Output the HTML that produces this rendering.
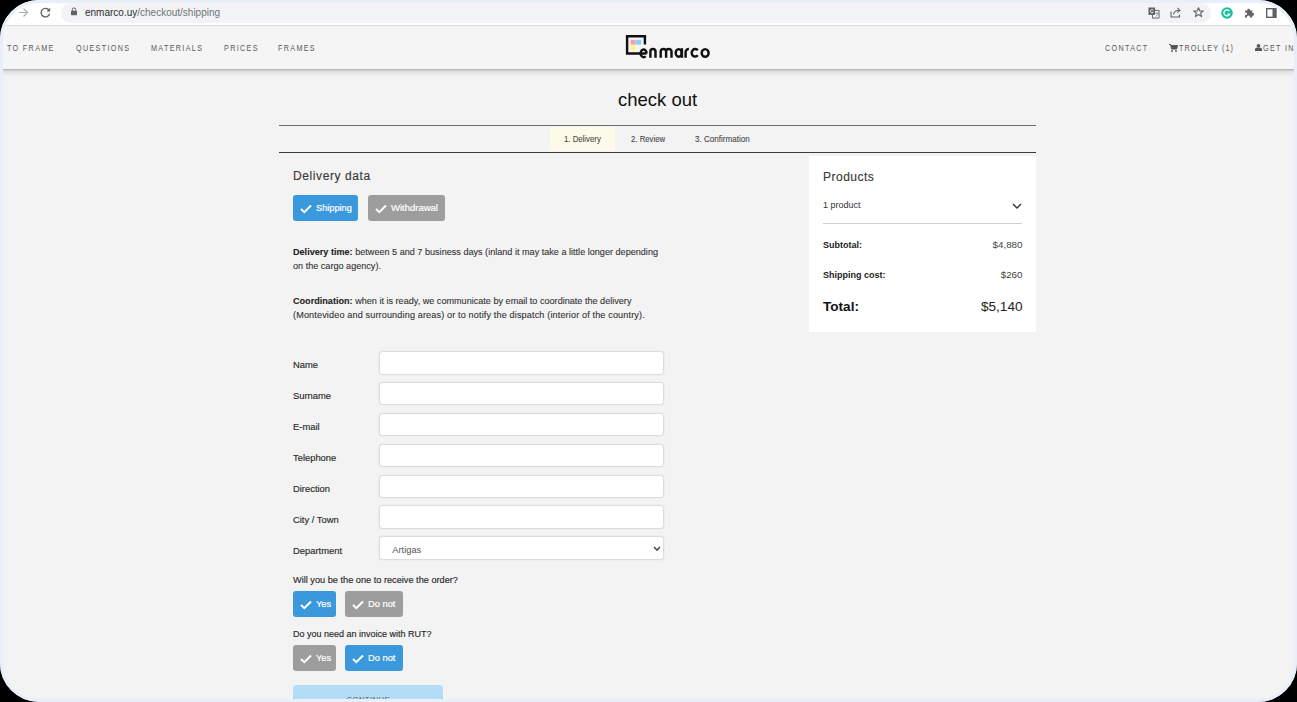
<!DOCTYPE html>
<html><head><meta charset="utf-8">
<style>
*{margin:0;padding:0;box-sizing:border-box}
html,body{width:1297px;height:702px;overflow:hidden;background:#f3f3f3;font-family:"Liberation Sans",sans-serif;position:relative}
.ab{position:absolute;white-space:nowrap;line-height:1}
#tb{position:absolute;left:0;top:0;width:1297px;height:26px;background:#fff;border-bottom:1px solid #e3e3e3}
#url{position:absolute;left:61px;top:3px;width:1150px;height:20px;border-radius:10px;background:#f1f3f4}
#nav{position:absolute;left:0;top:26px;width:1297px;height:43px;background:#f5f5f5;box-shadow:0 1px 2px rgba(0,0,0,.22),0 3px 6px rgba(0,0,0,.13)}
.nv{font-size:8.4px;letter-spacing:1.55px;color:#595959;top:18px;transform:scaleX(.86);transform-origin:0 0}
#frame{position:absolute;left:0;top:0;width:1297px;height:702px;border-radius:39px;border:3px solid #e8eff9;box-shadow:0 0 0 60px #000;pointer-events:none}
.cond{transform-origin:0 0}
.btn{position:absolute;border-radius:3px;color:#fff;font-size:9.3px;-webkit-text-stroke:.2px #fff}
.blue{background:#3a98dc}
.gray{background:#9d9d9d}
.btn svg{position:absolute}
.btn span{position:absolute;line-height:1}
.lbl{font-size:9.4px;color:#2a2a2a;-webkit-text-stroke:.15px #2a2a2a}
.inp{position:absolute;left:379.3px;width:284.5px;height:23.4px;background:#fff;border:1px solid #dcdcdc;border-radius:3.5px;box-shadow:0 0 0 .6px #e9e9e9}
.p9{font-size:9.1px;color:#363636;-webkit-text-stroke:.12px #363636}
</style></head><body>
<!-- browser toolbar -->
<div id="tb">
  <svg class="ab" style="left:18px;top:7px" width="11" height="11" viewBox="0 0 11 11"><path d="M0.5 5.5H9.5M5.5 1.5L9.5 5.5L5.5 9.5" fill="none" stroke="#b0b0b0" stroke-width="1.2"/></svg>
  <svg class="ab" style="left:40px;top:7px" width="11" height="11" viewBox="0 0 11 11"><path d="M9 3.2A4.3 4.3 0 1 0 9.6 6.8" fill="none" stroke="#5f6368" stroke-width="1.3"/><path d="M10.2 0.8V4.6H6.4Z" fill="#5f6368"/></svg>
  <div id="url">
    <svg class="ab" style="left:10px;top:4px" width="6" height="9" viewBox="0 0 6 9"><path d="M1.3 4V2.6A1.7 1.7 0 0 1 4.7 2.6V4" fill="none" stroke="#5f6368" stroke-width="1"/><rect x="0" y="3.8" width="6" height="4.4" rx=".6" fill="#5f6368"/></svg>
    <div class="ab" style="left:24px;top:5px;font-size:10px;color:#2b2d31">enmarco.uy<span style="color:#6f7377">/checkout/shipping</span></div>
    <!-- translate -->
    <svg class="ab" style="left:1087px;top:4px" width="12" height="12" viewBox="0 0 12 12"><rect x="4.6" y="3.6" width="6.4" height="7.4" fill="#fff" stroke="#5f6368" stroke-width="1"/><rect x=".5" y=".5" width="6.6" height="7.4" fill="#5f6368"/><path d="M5.2 3.2A1.6 1.6 0 1 0 5.2 5.2H3.9" fill="none" stroke="#fff" stroke-width=".8"/><path d="M7.3 6.3H10.3M8.8 5.5V6.3M7.6 9.8L10 7" stroke="#5f6368" stroke-width=".7"/></svg>
    <!-- share -->
    <svg class="ab" style="left:1109px;top:4px" width="12" height="11" viewBox="0 0 12 11"><path d="M1 4.5V10H9.5V7.5" fill="none" stroke="#5f6368" stroke-width="1.1"/><path d="M3.5 7.5C4 4.5 6 3.2 9 3.2M7.3 0.8L10 3.2L7.3 5.6" fill="none" stroke="#5f6368" stroke-width="1.1"/></svg>
    <!-- star -->
    <svg class="ab" style="left:1132px;top:4px" width="11" height="11" viewBox="0 0 11 11"><path d="M5.5 .8L6.9 4H10.3L7.6 6.1L8.6 9.6L5.5 7.5L2.4 9.6L3.4 6.1L.7 4H4.1Z" fill="none" stroke="#5f6368" stroke-width="1.1" stroke-linejoin="round"/></svg>
  </div>
  <!-- grammarly -->
  <svg class="ab" style="left:1221px;top:7px" width="12" height="12" viewBox="0 0 12 12"><circle cx="6" cy="6" r="5.8" fill="#15c39a"/><path d="M8.4 4.2A3 3 0 1 0 8.6 7.2H6.3" fill="none" stroke="#fff" stroke-width="1.3"/></svg>
  <!-- puzzle -->
  <svg class="ab" style="left:1244px;top:7px" width="11" height="11" viewBox="0 0 11 11"><path d="M1 3.5H3.3A1.4 1.4 0 1 1 6 3.5H8.3V6A1.4 1.4 0 1 1 8.3 8.7V10.5H5.8A1.4 1.4 0 1 0 3.2 10.5H1V8A1.4 1.4 0 1 0 1 5.5Z" fill="#5f6368"/></svg>
  <!-- side panel -->
  <svg class="ab" style="left:1266px;top:8px" width="11" height="10" viewBox="0 0 11 10"><rect x=".7" y=".7" width="9.3" height="8.6" fill="none" stroke="#5f6368" stroke-width="1.4"/><rect x="6.5" y=".7" width="3.5" height="8.6" fill="#5f6368"/></svg>
</div>

<!-- site nav -->
<div id="nav">
  <div class="ab nv" style="left:7px">TO FRAME</div>
  <div class="ab nv" style="left:76px">QUESTIONS</div>
  <div class="ab nv" style="left:151px">MATERIALS</div>
  <div class="ab nv" style="left:224px">PRICES</div>
  <div class="ab nv" style="left:278px">FRAMES</div>
  <div class="ab nv" style="left:1105px">CONTACT</div>
  <svg class="ab" style="left:1169px;top:18px" width="9" height="8" viewBox="0 0 9 8"><path d="M0 .5H1.6L2.6 5H7.6L8.6 1.6H2" fill="#555" stroke="#555" stroke-width="1"/><circle cx="3" cy="7" r=".9" fill="#555"/><circle cx="7" cy="7" r=".9" fill="#555"/></svg>
  <div class="ab nv" style="left:1179px;letter-spacing:1.2px">TROLLEY (1)</div>
  <svg class="ab" style="left:1255px;top:18px" width="7" height="7" viewBox="0 0 7 7"><circle cx="3.5" cy="1.8" r="1.8" fill="#555"/><path d="M0 7V5.5A2 2 0 0 1 2 3.6H5A2 2 0 0 1 7 5.5V7Z" fill="#555"/></svg>
  <div class="ab nv" style="left:1263px">GET IN</div>
  <!-- logo -->
  <svg class="ab" style="left:624px;top:8px" width="90" height="26" viewBox="0 0 90 26">
    <rect x="6.6" y="5.9" width="4.9" height="4.8" fill="#f59bbb"/>
    <rect x="11.8" y="5.9" width="5.4" height="4.8" fill="#8dd0f5"/>
    <rect x="6.6" y="10.7" width="4.9" height="5.4" fill="#fff28a"/>
    <g fill="none" stroke="#111" stroke-width="2.45">
      <path d="M20.9 10.4V2.2H3.1V19.4H22.6"/>
      <path d="M22.6 19.4A3 3.8 0 1 0 21.6 22.2"/>
      <path d="M26.4 23.8V17.6A2.55 2.55 0 0 1 31.5 17.6V23.8"/>
      <path d="M36.7 23.8V17.6A2.7 2.7 0 0 1 42.1 17.6V23.8M42.1 17.6A2.7 2.7 0 0 1 47.5 17.6V23.8"/>
      <ellipse cx="54.7" cy="18.9" rx="3.0" ry="3.8"/><path d="M57.9 14.2V23.8"/>
      <path d="M61.6 23.8V18A3 3 0 0 1 64.9 15.1"/>
      <path d="M73.8 16.3A3.5 3.8 0 1 0 73.8 21.3"/>
      <ellipse cx="81.15" cy="18.9" rx="3.45" ry="3.8"/>
    </g>
  </svg>
</div>

<!-- checkout header -->
<div class="ab" style="left:618px;top:91px;font-size:18.5px;color:#111">check out</div>
<div class="ab" style="left:279px;top:125px;width:757px;height:28px;border-top:1px solid #6b6b6b;border-bottom:1.2px solid #3c3c3c"></div>
<div class="ab" style="left:550px;top:127px;width:65px;height:24px;background:#fefae9"></div>
<div class="ab cond" style="left:564px;top:134px;font-size:9.5px;color:#474747;-webkit-text-stroke:.1px #474747;transform:scaleX(.82)">1. Delivery</div>
<div class="ab cond" style="left:631px;top:134px;font-size:9.5px;color:#474747;-webkit-text-stroke:.1px #474747;transform:scaleX(.82)">2. Review</div>
<div class="ab cond" style="left:695px;top:134px;font-size:9.5px;color:#474747;-webkit-text-stroke:.1px #474747;transform:scaleX(.85)">3. Confirmation</div>

<!-- left column -->
<div class="ab" style="left:293px;top:170px;font-size:12px;letter-spacing:.6px;color:#3a3a3a;-webkit-text-stroke:.15px #3a3a3a">Delivery data</div>
<div class="btn blue" style="left:293px;top:195px;width:65px;height:26px">
  <svg style="left:6.6px;top:9px" width="12" height="10" viewBox="0 0 12 10"><path d="M1 5L4.3 8.2L11 1.5" fill="none" stroke="#fff" stroke-width="2"/></svg>
  <span style="left:23px;top:8.8px;font-size:9.2px">Shipping</span>
</div>
<div class="btn gray" style="left:368px;top:195px;width:77px;height:26px">
  <svg style="left:6.6px;top:9px" width="12" height="10" viewBox="0 0 12 10"><path d="M1 5L4.3 8.2L11 1.5" fill="none" stroke="#fff" stroke-width="2"/></svg>
  <span style="left:23px;top:8px;font-size:9.5px">Withdrawal</span>
</div>

<div class="ab p9" style="left:293px;top:245.4px;line-height:14px"><b style="color:#222">Delivery time:</b> between 5 and 7 business days (inland it may take a little longer depending<br>on the cargo agency).</div>
<div class="ab p9" style="left:293px;top:294.1px;line-height:14px"><b style="color:#222">Coordination:</b> when it is ready, we communicate by email to coordinate the delivery<br><span style="letter-spacing:.14px">(Montevideo and surrounding areas) or to notify the dispatch (interior of the country).</span></div>

<div class="ab lbl" style="left:293px;top:360.4px">Name</div>
<div class="inp" style="top:351.3px"></div>
<div class="ab lbl" style="left:293px;top:391.3px">Surname</div>
<div class="inp" style="top:382.1px"></div>
<div class="ab lbl" style="left:293px;top:422.1px">E-mail</div>
<div class="inp" style="top:412.9px"></div>
<div class="ab lbl" style="left:293px;top:453.0px">Telephone</div>
<div class="inp" style="top:443.7px"></div>
<div class="ab lbl" style="left:293px;top:483.8px">Direction</div>
<div class="inp" style="top:474.5px"></div>
<div class="ab lbl" style="left:293px;top:514.7px">City / Town</div>
<div class="inp" style="top:505.3px"></div>
<div class="ab lbl" style="left:293px;top:545.5px">Department</div>
<div class="inp" style="top:536.1px;height:24.2px">
  <div class="ab" style="left:12px;top:8.8px;font-size:9.3px;color:#555">Artigas</div>
  <svg class="ab" style="left:272.6px;top:8.6px" width="8" height="6" viewBox="0 0 8 6"><path d="M1 1L4 4L7 1" fill="none" stroke="#4a4a4a" stroke-width="1.6"/></svg>
</div>

<div class="ab lbl" style="left:293px;top:575.5px;font-size:9.2px">Will you be the one to receive the order?</div>
<div class="btn blue" style="left:293px;top:591px;width:43px;height:26px">
  <svg style="left:6.6px;top:9px" width="12" height="10" viewBox="0 0 12 10"><path d="M1 5L4.3 8.2L11 1.5" fill="none" stroke="#fff" stroke-width="2"/></svg>
  <span style="left:23px;top:9.4px">Yes</span>
</div>
<div class="btn gray" style="left:345px;top:591px;width:58px;height:26px">
  <svg style="left:6.6px;top:9px" width="12" height="10" viewBox="0 0 12 10"><path d="M1 5L4.3 8.2L11 1.5" fill="none" stroke="#fff" stroke-width="2"/></svg>
  <span style="left:23px;top:9.4px">Do not</span>
</div>
<div class="ab lbl" style="left:293px;top:630px;font-size:9px">Do you need an invoice with RUT?</div>
<div class="btn gray" style="left:293px;top:645px;width:43px;height:26px">
  <svg style="left:6.6px;top:9px" width="12" height="10" viewBox="0 0 12 10"><path d="M1 5L4.3 8.2L11 1.5" fill="none" stroke="#fff" stroke-width="2"/></svg>
  <span style="left:23px;top:9.4px">Yes</span>
</div>
<div class="btn blue" style="left:345px;top:645px;width:58px;height:26px">
  <svg style="left:6.6px;top:9px" width="12" height="10" viewBox="0 0 12 10"><path d="M1 5L4.3 8.2L11 1.5" fill="none" stroke="#fff" stroke-width="2"/></svg>
  <span style="left:23px;top:9.4px">Do not</span>
</div>
<div class="ab" style="left:293px;top:685px;width:150px;height:30px;background:#b3dcf6;border-radius:4px">
  <div class="ab" style="left:53.5px;top:11.3px;font-size:7.6px;letter-spacing:.5px;color:#555e66">CONTINUE</div>
</div>

<!-- right panel -->
<div class="ab" style="left:808.7px;top:156px;width:227.5px;height:176.3px;background:#fff"></div>
<div class="ab" style="left:823px;top:170.7px;font-size:12px;letter-spacing:.5px;color:#3a3a3a;-webkit-text-stroke:.15px #3a3a3a">Products</div>
<div class="ab" style="left:823px;top:200.8px;font-size:9px;color:#333">1 product</div>
<svg class="ab" style="left:1012px;top:203px" width="10" height="7" viewBox="0 0 10 7"><path d="M1 1L5 5L9 1" fill="none" stroke="#333" stroke-width="1.4"/></svg>
<div class="ab" style="left:823px;top:223px;width:199px;height:1px;background:#cfcfcf"></div>
<div class="ab" style="left:823px;top:241px;font-size:9px;font-weight:bold;color:#222">Subtotal:</div>
<div class="ab" style="right:274.5px;top:240.4px;font-size:9.8px;color:#444">$4,880</div>
<div class="ab" style="left:823px;top:270.7px;font-size:9px;font-weight:bold;color:#222">Shipping cost:</div>
<div class="ab" style="right:274.5px;top:270.1px;font-size:9.8px;color:#444">$260</div>
<div class="ab" style="left:823px;top:299.6px;font-size:13.6px;font-weight:bold;color:#111">Total:</div>
<div class="ab" style="right:274.5px;top:299.6px;font-size:13.6px;color:#222">$5,140</div>

<div id="frame"></div>
</body></html>
